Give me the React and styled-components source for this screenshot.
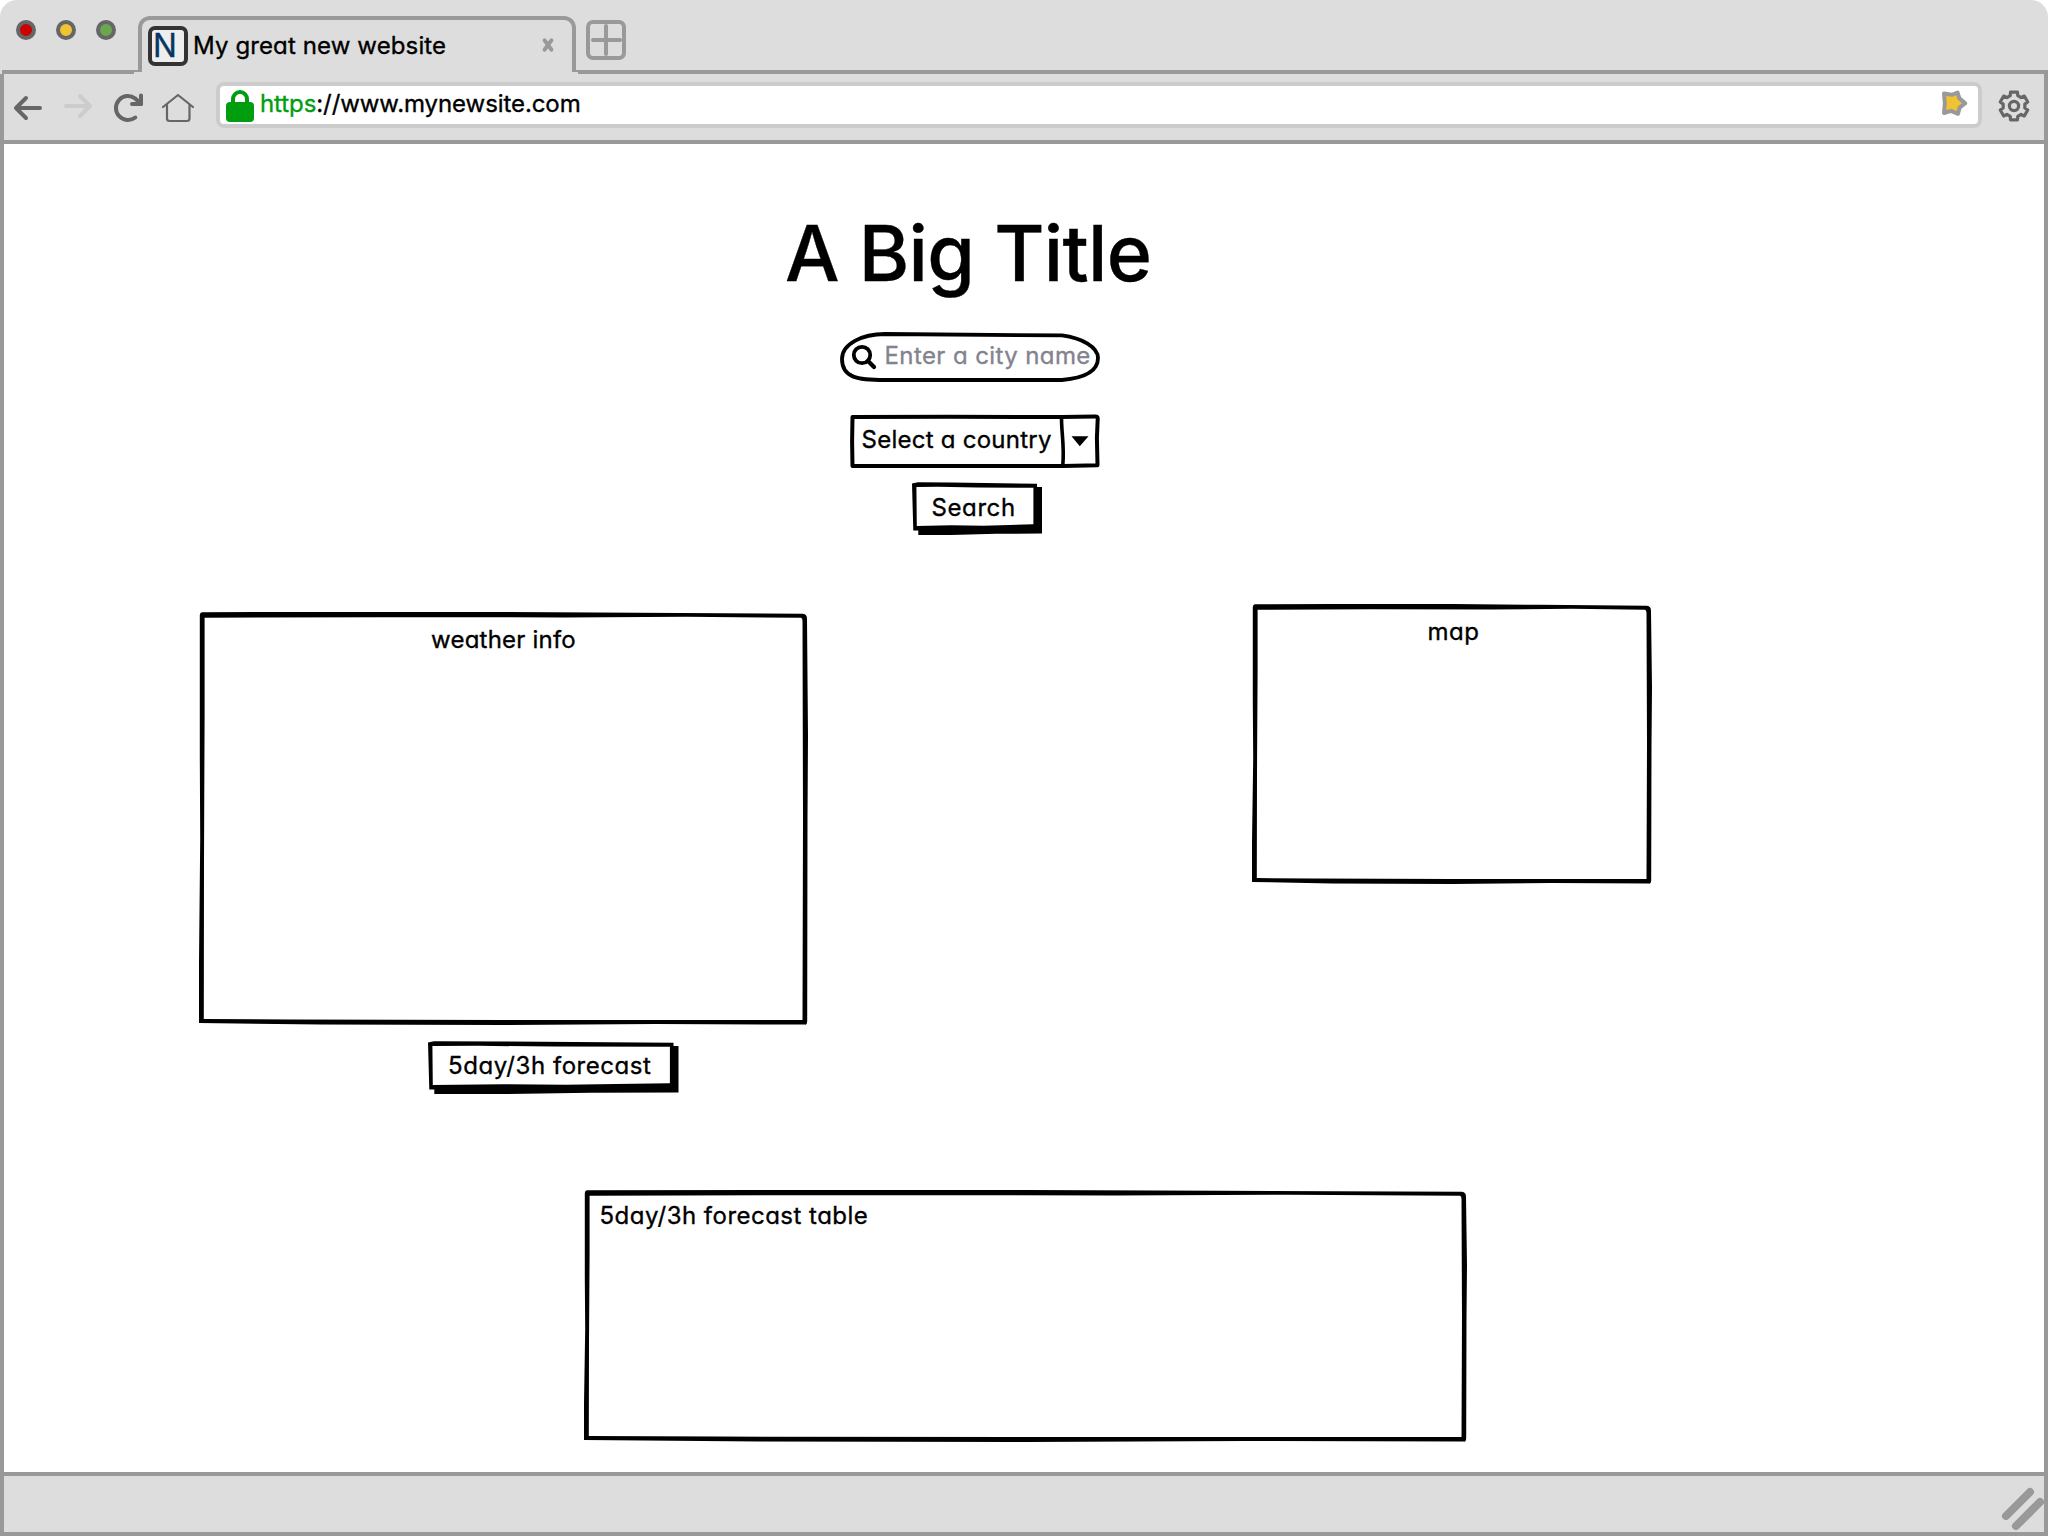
import React from "react";
import styled, { createGlobalStyle } from "styled-components";

const GlobalStyle = createGlobalStyle`
  * { box-sizing: border-box; }
  body { margin: 0; background: #fff; }
`;

const line = "#999";

const Window = styled.div`
  display: flex;
  flex-direction: column;
  width: 2048px;
  height: 1536px;
  background: #ddd;
  border-radius: 17px 17px 0 0;
  overflow: hidden;
  color: #000;
  font-family: Inter, "Open Sans", sans-serif;
  font-feature-settings: "cv11";
  font-size: 24px;
  line-height: 24px;
  -webkit-text-stroke: 0.35px currentColor;
`;

const TabStrip = styled.div`
  display: flex;
  align-items: flex-start;
  flex: none;
  height: 74px;
  padding-left: 2px;
`;

const Lights = styled.div`
  display: flex;
  gap: 20px;
  width: 132px;
  height: 74px;
  padding: 20px 0 0 14px;
  border-bottom: 4px solid ${line};
`;

const Light = styled.span`
  width: 20px;
  height: 20px;
  border: 4px solid #666;
  border-radius: 50%;
  background: ${(p) => p.$color};
`;

const TabFoot = styled.span`
  width: ${(p) => p.$width}px;
  height: 72px;
  border-bottom: 2px solid ${line};
`;

const Tab = styled.div`
  display: flex;
  align-items: flex-start;
  width: 438px;
  height: 56px;
  margin-top: 16px;
  padding: 6px 0 0 6px;
  border: 4px solid ${line};
  border-bottom: 0;
  border-radius: 12px 12px 0 0;
`;

const Favicon = styled.span`
  width: 40px;
  height: 40px;
  padding: 3px 0 0 0.5px;
  border: 4px solid #333;
  border-radius: 7px;
  background: #eee;
  color: #073763;
  font-size: 33px;
  line-height: 24px;

  span {
    display: inline-block;
    transform: scaleX(0.96);
    transform-origin: left;
  }
`;

const TabTitle = styled.span`
  flex: 1;
  margin: 8px 0 0 5px;
  letter-spacing: 0.12px;
  white-space: nowrap;
`;

const CloseMark = styled.svg`
  width: 14px;
  height: 16px;
  margin: 11px 17px 0 0;
`;

const NewTab = styled.svg`
  width: 40px;
  height: 40px;
`;

const StripRest = styled.div`
  flex: 1;
  height: 74px;
  padding: 20px 0 0 8px;
  border-bottom: 4px solid ${line};
`;

const Frame = styled.div`
  display: flex;
  flex-direction: column;
  flex: 1;
  border: solid ${line};
  border-width: 0 4px 4px;
`;

const Toolbar = styled.div`
  display: flex;
  height: 70px;
  border-bottom: 4px solid ${line};
`;

const NavIcons = styled.svg`
  width: 212px;
  height: 66px;
  flex: none;
`;

const AddressBar = styled.div`
  display: flex;
  align-items: flex-start;
  width: 1766px;
  height: 46px;
  margin-top: 8px;
  padding-left: 6px;
  border: 4px solid #ccc;
  border-radius: 8px;
  background: #fff;
`;

const Lock = styled.svg`
  width: 28px;
  height: 32px;
  margin-top: 4px;
`;

const Url = styled.span`
  flex: 1;
  margin: 6px 0 0 6px;
  letter-spacing: -0.08px;

  em {
    color: #009e0f;
    font-style: normal;
  }
`;

const Star = styled.svg`
  width: 34px;
  height: 34px;
  margin: 0 5px 0 0;
`;

const Gear = styled.svg`
  width: 40px;
  height: 40px;
  margin: 12px 0 0 12px;
`;

const Page = styled.main`
  height: 1328px;
  background: #fff;
`;

const Title = styled.h1`
  margin: 0;
  padding: 69px 0 0 781px;
  font-size: 77px;
  font-weight: 500;
  line-height: 80px;
  letter-spacing: -0.7px;
  white-space: nowrap;
`;

const SearchForm = styled.div`
  display: flex;
  flex-direction: column;
  align-items: flex-end;
  width: 260px;
  margin: 39px 0 0 836px;
`;

/* A control or panel whose hand-drawn outline is painted behind its label. */
const Sketched = styled.div`
  position: relative;
  width: ${(p) => p.$width}px;
  height: ${(p) => p.$height}px;
  white-space: nowrap;
`;

const Outline = styled.svg`
  position: absolute;
  inset: 0;
  width: 100%;
  height: 100%;
  overflow: visible;
`;

const Label = styled.span`
  position: relative;
  display: block;
  letter-spacing: ${(p) => p.$spacing || 0}px;
`;

const CityField = styled(Sketched)`
  padding: 12px 0 0 44.5px;
  color: #83838f;
`;

const CountrySelect = styled(Sketched)`
  margin-top: 33px;
  padding: 13px 0 0 11.5px;
`;

const ButtonBox = styled(Sketched)`
  padding-top: 13.5px;
  padding-left: ${(p) => p.$inset}px;
`;

const SearchSlot = styled.div`
  margin: 14px 58.5px 0 0;
`;

const Panels = styled.div`
  display: flex;
  align-items: flex-start;
  gap: 444px;
  margin: 69px 0 0 194.5px;
`;

const WeatherColumn = styled.div`
  display: flex;
  flex-direction: column;
  padding-top: 8px;
`;

const ForecastSlot = styled.div`
  margin: 15.5px 0 0 229px;
`;

const PanelBox = styled(Sketched)`
  padding: ${(p) => p.$padding};
  text-align: ${(p) => p.$align || "center"};
`;

const TableSlot = styled.div`
  margin: 96.5px 0 0 580px;
`;

const StatusBar = styled.footer`
  display: flex;
  justify-content: flex-end;
  flex: 1;
  border-top: 4px solid ${line};
`;

const Grip = styled.svg`
  width: 44px;
  height: 56px;
`;

function Panel({ width: w, height: h, padding, align, spacing, children }) {
  const outer = `M3 .2 Q1 .4 .8 3 L.8 ${h * 0.35} L1.2 ${h * 0.55} L0 ${h * 0.85} L0 ${h - 2}
    L${w * 0.2} ${h - 0.6} L${w * 0.5} ${h} L${w * 0.75} ${h - 1} L${w - 3} ${h - 0.4} Q${w - 1} ${h} ${w - 0.8} ${h - 4}
    L${w - 0.5} ${h * 0.5} L${w} ${h * 0.3} L${w - 1} 7 Q${w - 1} 2 ${w - 5} 1.8
    L${w * 0.72} .8 L${w * 0.5} 0 L${w * 0.2} 0 Z`;
  const inner = `M5.6 5.7 L${w * 0.3} 5.2 L${w * 0.6} 5.4 L${w * 0.8} 4.8 L${w - 7} 5.8 Q${w - 5.5} 6 ${w - 5.5} 9
    L${w - 5} ${h * 0.5} L${w - 5.5} ${h - 5} L${w * 0.5} ${h - 5} L${w * 0.15} ${h - 5.4} L4.8 ${h - 6}
    L5 ${h * 0.6} L5.6 ${h * 0.25} Z`;
  return (
    <PanelBox $width={w} $height={h} $padding={padding} $align={align}>
      <Outline viewBox={`0 0 ${w} ${h}`}>
        <path d={outer + inner} fillRule="evenodd" />
      </Outline>
      <Label $spacing={spacing}>{children}</Label>
    </PanelBox>
  );
}

function Button({ width: w, inset, spacing, children }) {
  return (
    <ButtonBox $width={w} $height={53} $inset={inset}>
      <Outline viewBox={`0 0 ${w} 53`}>
        <path
          fillRule="evenodd"
          d={`M0 1.5 L6 .3 L${w * 0.3} .4 L${w - 5} 1.8 L${w - 5} 5 H${w} V51.6
            L${w * 0.65} 51.8 L${w * 0.3} 53 L6.3 53 V48.6 H1.3 Z
            M4.4 5 L4.8 44 L${w * 0.3} 43.3 L${w * 0.55} 43.8 L${w * 0.75} 43 L${w - 8.6} 42.2 V5.8 L${w * 0.5} 5.6 L${w * 0.2} 4.8 Z`}
        />
      </Outline>
      <Label $spacing={spacing}>{children}</Label>
    </ButtonBox>
  );
}

function gearPath(cx, cy) {
  const points = [];
  for (let i = 0; i < 6; i++) {
    const base = -90 + i * 60;
    [
      [-20, 11],
      [-14, 14.3],
      [14, 14.3],
      [20, 11],
    ].forEach(([a, r]) => {
      const t = ((base + a) * Math.PI) / 180;
      points.push(`${(cx + r * Math.cos(t)).toFixed(2)} ${(cy + r * Math.sin(t)).toFixed(2)}`);
    });
  }
  return `M${points.join(" L")} Z`;
}

export default function App() {
  return (
    <>
      <GlobalStyle />
      <Window>
        <TabStrip>
          <Lights>
            <Light $color="#cc0000" />
            <Light $color="#f1c232" />
            <Light $color="#6aa84f" />
          </Lights>
          <TabFoot $width={4} />
          <Tab>
            <Favicon><span>N</span></Favicon>
            <TabTitle>My great new website</TabTitle>
            <CloseMark viewBox="0 0 14 16">
              <path d="M3.6 3.4 L10.4 12.6 M10.4 3.4 L3.6 12.6" stroke={line} strokeWidth="4" strokeLinecap="round" />
            </CloseMark>
          </Tab>
          <TabFoot $width={2} />
          <StripRest>
            <NewTab viewBox="0 0 40 40" fill="none" stroke={line} strokeWidth="4" strokeLinecap="round">
              <rect x="2" y="2" width="36" height="36" rx="5" />
              <path d="M20 6 V34 M7 20 H34" />
            </NewTab>
          </StripRest>
        </TabStrip>

        <Frame>
          <Toolbar>
            <NavIcons viewBox="4 74 212 66" fill="none" strokeLinecap="round" strokeLinejoin="round">
              <g stroke="#666" strokeWidth="4">
                <path d="M26 98 L16 108 L26 118 M17 108 H40" />
                <path d="M135.3 117.5 A12 12 0 1 1 135 98.3 L141 104" />
                <path d="M141 95.5 V104 H132" />
              </g>
              <path d="M80 96 L90 106 L80 116 M66 106 H89" stroke="#ccc" strokeWidth="4" />
              <path d="M163 107 L178 95 L193 107 M167 105 V118.5 Q167 121 169.5 121 H187 Q189.5 121 189.5 118.5 V105" stroke="#666" strokeWidth="2.2" />
            </NavIcons>
            <AddressBar>
              <Lock viewBox="0 0 28 32">
                <path d="M7 13 V9 A7 7 0 0 1 21 9 V13" fill="none" stroke="#009e0f" strokeWidth="4" />
                <rect y="12" width="28" height="20" rx="4" fill="#009e0f" />
              </Lock>
              <Url><em>https</em>://www.mynewsite.com</Url>
              <Star viewBox="1939 86 34 34">
                <path d="M1944 93.6 L1951.7 94.8 L1957.6 92.6 L1959.4 98.4 L1965.3 103.2 L1959.6 107.6 L1958 113.8 L1951 110.8 L1944 113 L1944.8 103.6 Z" fill="#f1c232" stroke={line} strokeWidth="4" strokeLinejoin="round" />
              </Star>
            </AddressBar>
            <Gear viewBox="1994 86 40 40" fill="none" stroke="#666" strokeWidth="3.2" strokeLinejoin="round">
              <path d={gearPath(2014, 106)} />
              <circle cx="2014" cy="106" r="4.6" />
            </Gear>
          </Toolbar>

          <Page>
            <Title>A Big Title</Title>
            <SearchForm>
              <CityField $width={260} $height={50}>
                <Outline viewBox="840 332 260 50" fill="none" stroke="#000" strokeLinecap="round">
                  <path d="M885 334 L1062 335.4 C1082 338 1098 347 1098 358 C1098 371 1084 378 1062 380 H885 C858 380 842 378 842 359 C842 344 862 334 885 334 Z" strokeWidth="3.8" />
                  <circle cx="862" cy="355" r="8.2" strokeWidth="3.8" />
                  <path d="M868 361 L874 367" strokeWidth="4.2" />
                </Outline>
                <Label $spacing={0.4}>Enter a city name</Label>
              </CityField>
              <CountrySelect $width={250} $height={53}>
                <Outline viewBox="850.5 415 250 53" fill="none" stroke="#000" strokeWidth="4" strokeLinejoin="round">
                  <path d="M853 417 L950 416.8 L1062 417 L1096 416.4 Q1098.4 416.4 1098.2 419 L1097.4 438 L1098 465.2 L1064 466 L853 466 L852.6 442 Z" />
                  <path d="M1062 418 C1062 433 1065 447 1063.3 465" strokeWidth="3.6" />
                  <path d="M1072 436.3 H1089 L1080.3 446.3 Z" fill="#000" stroke="none" />
                </Outline>
                <Label $spacing={0.25}>Select a country</Label>
              </CountrySelect>
              <SearchSlot>
                <Button width={130} inset={20} spacing={0.6}>Search</Button>
              </SearchSlot>
            </SearchForm>

            <Panels>
              <WeatherColumn>
                <Panel width={609} height={413} padding="16px 0 0 1px" spacing={0.22}>weather info</Panel>
                <ForecastSlot>
                  <Button width={250.5} inset={20.5} spacing={0.55}>5day/3h forecast</Button>
                </ForecastSlot>
              </WeatherColumn>
              <Panel width={400} height={280} padding="15.5px 0 0 4px" spacing={0.6}>map</Panel>
            </Panels>
            <TableSlot>
              <Panel width={883} height={252} padding="13.5px 0 0 15.5px" align="left" spacing={0.48}>
                5day/3h forecast table
              </Panel>
            </TableSlot>
          </Page>

          <StatusBar>
            <Grip viewBox="2000 1476 44 56">
              <path d="M2006 1516 L2030 1492 M2016 1526 L2040 1502" stroke={line} strokeWidth="8" strokeLinecap="round" />
            </Grip>
          </StatusBar>
        </Frame>
      </Window>
    </>
  );
}
